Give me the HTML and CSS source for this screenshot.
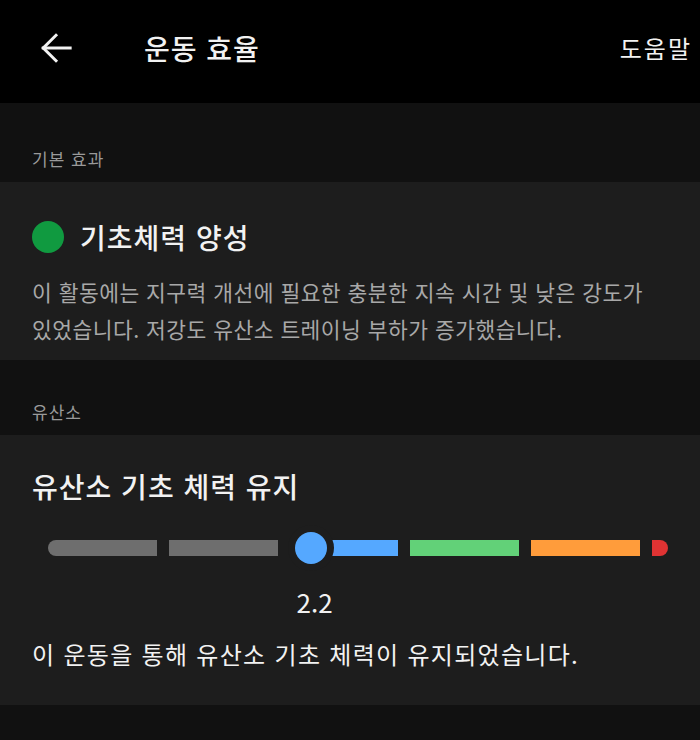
FILE: index.html
```html
<!DOCTYPE html>
<html lang="ko">
<head>
  <meta charset="UTF-8">
  <meta name="viewport" content="width=device-width, initial-scale=1.0">
  <title>운동 효율</title>
  <link rel="stylesheet" href="styles.css">
</head>
<body>

  <!-- Top bar -->
  <header class="topbar">
    <button class="back" aria-label="뒤로">
      <svg width="34" height="34" viewBox="0 0 24 24" fill="none" stroke="#f2f2f2" stroke-width="2.1" stroke-linecap="square">
        <path d="M22 12H3"/>
        <path d="M12 3 3 12l9 9"/>
      </svg>
    </button>
    <h1 class="title">운동 효율</h1>
    <span class="help">도움말</span>
  </header>

  <main class="content">
    <div class="section-label">기본 효과</div>
    <section class="card effect">
      <div class="effect-title"><span class="dot"></span>기초체력 양성</div>
      <p class="effect-desc">이 활동에는 지구력 개선에 필요한 충분한 지속 시간 및 낮은 강도가 있었습니다. 저강도 유산소 트레이닝 부하가 증가했습니다.</p>
    </section>

    <div class="section-label">유산소</div>
    <section class="card aerobic">
      <h2 class="card-title">유산소 기초 체력 유지</h2>
      <div class="gauge">
        <div class="scale">
          <div class="bar">
            <span class="seg seg-gray"></span>
            <span class="seg seg-gray"></span>
            <span class="seg seg-blue"></span>
            <span class="seg seg-green"></span>
            <span class="seg seg-orange"></span>
            <span class="seg-end"></span>
          </div>
          <span class="knob" style="left: 42.4%"></span>
        </div>
        <div class="value-row">
          <span class="value" style="left: 43%">2.2</span>
        </div>
      </div>
      <p class="result">이 운동을 통해 유산소 기초 체력이 유지되었습니다.</p>
    </section>
  </main>

</body>
</html>
```

FILE: styles.css
```css
body {
  margin: 0;
  padding: 0;
  background-color: #111111;
  color: #f2f2f2;
  font-family: "Noto Sans CJK KR", "Noto Sans", sans-serif;
  word-break: keep-all;
}

.topbar {
  display: flex;
  align-items: center;
  height: 103px;
  box-sizing: border-box;
  padding: 0 8px 8px 39px;
  background-color: #000;
}

.back {
  display: flex;
  padding: 0;
  border: none;
  background: none;
  cursor: pointer;
}

.title {
  flex: 1;
  margin: 0 0 0 71px;
  font-size: 28px;
  font-weight: 500;
  line-height: 32px;
  letter-spacing: 1px;
}

.help {
  font-size: 24px;
  line-height: 30px;
  letter-spacing: 2px;
}

.content {
  padding-top: 4px;
}

.section-label {
  padding: 40px 32px 11px;
  font-size: 17px;
  line-height: 24px;
  letter-spacing: 1px;
  color: #9a9a9a;
}

.card {
  background-color: #1d1d1d;
  padding: 0 32px;
}

.effect {
  padding-top: 39px;
  padding-bottom: 13px;
}

.effect-title {
  display: flex;
  align-items: center;
  gap: 16px;
  font-size: 28px;
  font-weight: 500;
  line-height: 32px;
  letter-spacing: 1px;
}

.dot {
  width: 32px;
  height: 32px;
  border-radius: 50%;
  background-color: #109a40;
}

.effect-desc {
  margin: 20px 0 0;
  font-size: 21.5px;
  line-height: 37px;
  letter-spacing: 0.45px;
  color: #a8a8a8;
}

.aerobic {
  padding-top: 35px;
  padding-bottom: 35px;
}

.card-title {
  margin: 0;
  font-size: 28px;
  font-weight: 500;
  line-height: 32px;
  letter-spacing: 1px;
}

.gauge {
  margin-top: 30px;
  padding-left: 16px;
}

.scale {
  position: relative;
  display: flex;
  align-items: center;
  height: 32px;
}

.bar {
  display: flex;
  gap: 12px;
  width: 100%;
  height: 16px;
}

.seg {
  flex: 1;
}

.seg-gray { background-color: #6e6e6e; }
.seg-gray:first-child { border-radius: 8px 0 0 8px; }
.seg-blue { background-color: #55a8ff; }
.seg-green { background-color: #62d178; }
.seg-orange { background-color: #ff9c3b; }

.seg-end {
  width: 16px;
  border-radius: 0 8px 8px 0;
  background-color: #e03333;
}

.knob {
  position: absolute;
  top: 0;
  width: 32px;
  height: 32px;
  border-radius: 50%;
  background-color: #55a8ff;
  box-shadow: 0 0 0 7px #1d1d1d;
  transform: translateX(-50%);
}

.value-row {
  position: relative;
  height: 30px;
  margin-top: 23px;
}

.value {
  position: absolute;
  top: 0;
  font-size: 26px;
  line-height: 30px;
  transform: translateX(-50%);
}

.result {
  margin: 21px 0 0;
  font-size: 24px;
  line-height: 32px;
  letter-spacing: 1.3px;
}
```
